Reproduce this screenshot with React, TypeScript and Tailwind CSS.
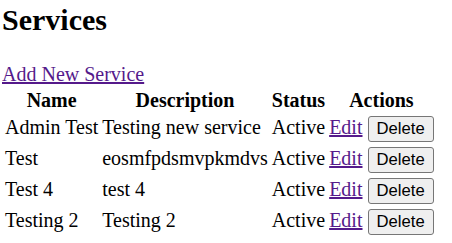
const services = [
  { name: "Admin Test", description: "Testing new service", status: "Active" },
  { name: "Test", description: "eosmfpdsmvpkmdvs", status: "Active" },
  { name: "Test 4", description: "test 4", status: "Active" },
  { name: "Testing 2", description: "Testing 2", status: "Active" },
];

const App = () => {
  return (
    <div className="px-[2px] font-['Liberation_Serif',serif] text-[20px] leading-[normal] text-black">
      <h1 className="mt-[3px] mb-[26px] text-[30px] font-bold leading-[normal]">Services</h1>

      <a href="#" className="text-[#551a8b] underline">
        Add New Service
      </a>

      <table className="border-separate border-spacing-[2px]">
        <thead>
          <tr>
            <th className="p-[1px] text-center font-bold">Name</th>
            <th className="p-[1px] text-center font-bold">Description</th>
            <th className="p-[1px] text-center font-bold">Status</th>
            <th className="p-[1px] text-center font-bold">Actions</th>
          </tr>
        </thead>
        <tbody>
          {services.map((s) => (
            <tr key={s.name}>
              <td className="h-[29px] p-[1px] align-baseline">{s.name}</td>
              <td className="h-[29px] p-[1px] align-baseline">{s.description}</td>
              <td className="h-[29px] p-[1px] align-baseline">{s.status}</td>
              <td className="h-[29px] p-[1px] align-baseline whitespace-nowrap">
                <a href="#" className="text-[#551a8b] underline">
                  Edit
                </a>{" "}
                <button className="h-[26px] rounded-[3px] border border-[#767676] bg-[#efefef] px-[8px] py-0 font-['Liberation_Sans',Arial,sans-serif] text-[16.67px] leading-[normal] text-black">
                  Delete
                </button>
              </td>
            </tr>
          ))}
        </tbody>
      </table>
    </div>
  );
};

export default App;
